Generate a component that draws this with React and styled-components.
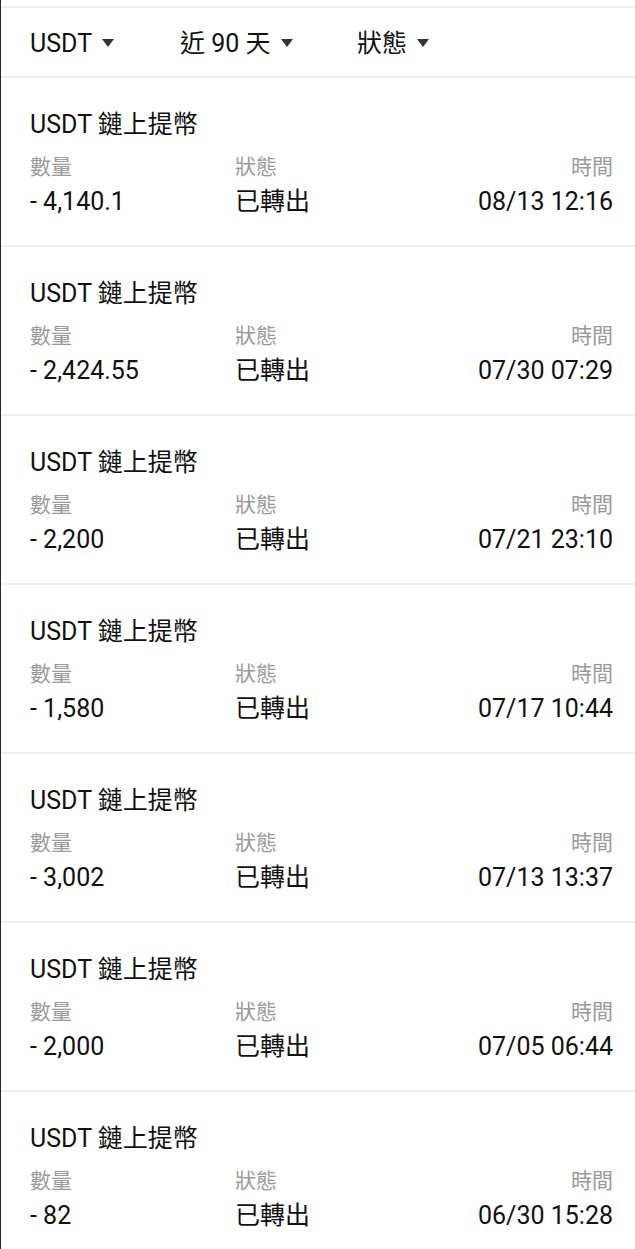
import React from "react";
import styled, { createGlobalStyle } from "styled-components";

const Global = createGlobalStyle`
  html, body { margin: 0; padding: 0; background: #fff; }
  body { font-family: Roboto, "Noto Sans CJK TC", "Noto Sans", sans-serif; color: #111; }
`;

const Page = styled.div`
  width: 635px;
  min-height: 1249px;
  box-sizing: border-box;
  border-left: 1px solid #2a2a2a;
  padding-top: 6px;
  background: #fff;
`;

const FilterBar = styled.div`
  display: flex;
  align-items: center;
  box-sizing: border-box;
  height: 72px;
  padding: 4px 0 0 29px;
  border-top: 2px solid #f0f0f0;
  border-bottom: 2px solid #f0f0f0;
`;

const Filter = styled.div`
  display: flex;
  align-items: center;
  gap: 10px;
  width: ${(p) => p.$w}px;
  font-size: 25px;
  line-height: 32px;
  color: #111;
`;

const Caret = styled.span`
  width: 0;
  height: 0;
  border-left: 6.5px solid transparent;
  border-right: 6.5px solid transparent;
  border-top: 8px solid #333;
  margin-top: -3px;
`;

const Item = styled.div`
  box-sizing: border-box;
  height: 169px;
  padding: 31px 22px 0 29px;
  border-bottom: 2px solid #f0f0f0;
`;

const Title = styled.div`
  font-size: 25px;
  line-height: 32px;
  color: #111;
`;

const Grid = styled.div`
  display: grid;
  grid-template-columns: 205px 1fr auto;
  margin-top: 11px;
  row-gap: 4px;
`;

const Label = styled.div`
  font-size: 21px;
  line-height: 30px;
  color: #9a9a9a;
  text-align: ${(p) => (p.$right ? "right" : "left")};
`;

const Value = styled.div`
  font-size: 25px;
  line-height: 32px;
  color: #111;
  text-align: ${(p) => (p.$right ? "right" : "left")};
`;

const rows = [
  ["- 4,140.1", "08/13 12:16"],
  ["- 2,424.55", "07/30 07:29"],
  ["- 2,200", "07/21 23:10"],
  ["- 1,580", "07/17 10:44"],
  ["- 3,002", "07/13 13:37"],
  ["- 2,000", "07/05 06:44"],
  ["- 82", "06/30 15:28"],
];

export default function App() {
  return (
    <>
      <Global />
      <Page>
        <FilterBar>
          <Filter $w={150}>USDT<Caret /></Filter>
          <Filter $w={177}>近 90 天<Caret /></Filter>
          <Filter $w={120}>狀態<Caret /></Filter>
        </FilterBar>
        {rows.map(([amt, time], i) => (
          <Item key={i}>
            <Title>USDT 鏈上提幣</Title>
            <Grid>
              <Label>數量</Label>
              <Label>狀態</Label>
              <Label $right>時間</Label>
              <Value>{amt}</Value>
              <Value>已轉出</Value>
              <Value $right>{time}</Value>
            </Grid>
          </Item>
        ))}
      </Page>
    </>
  );
}
